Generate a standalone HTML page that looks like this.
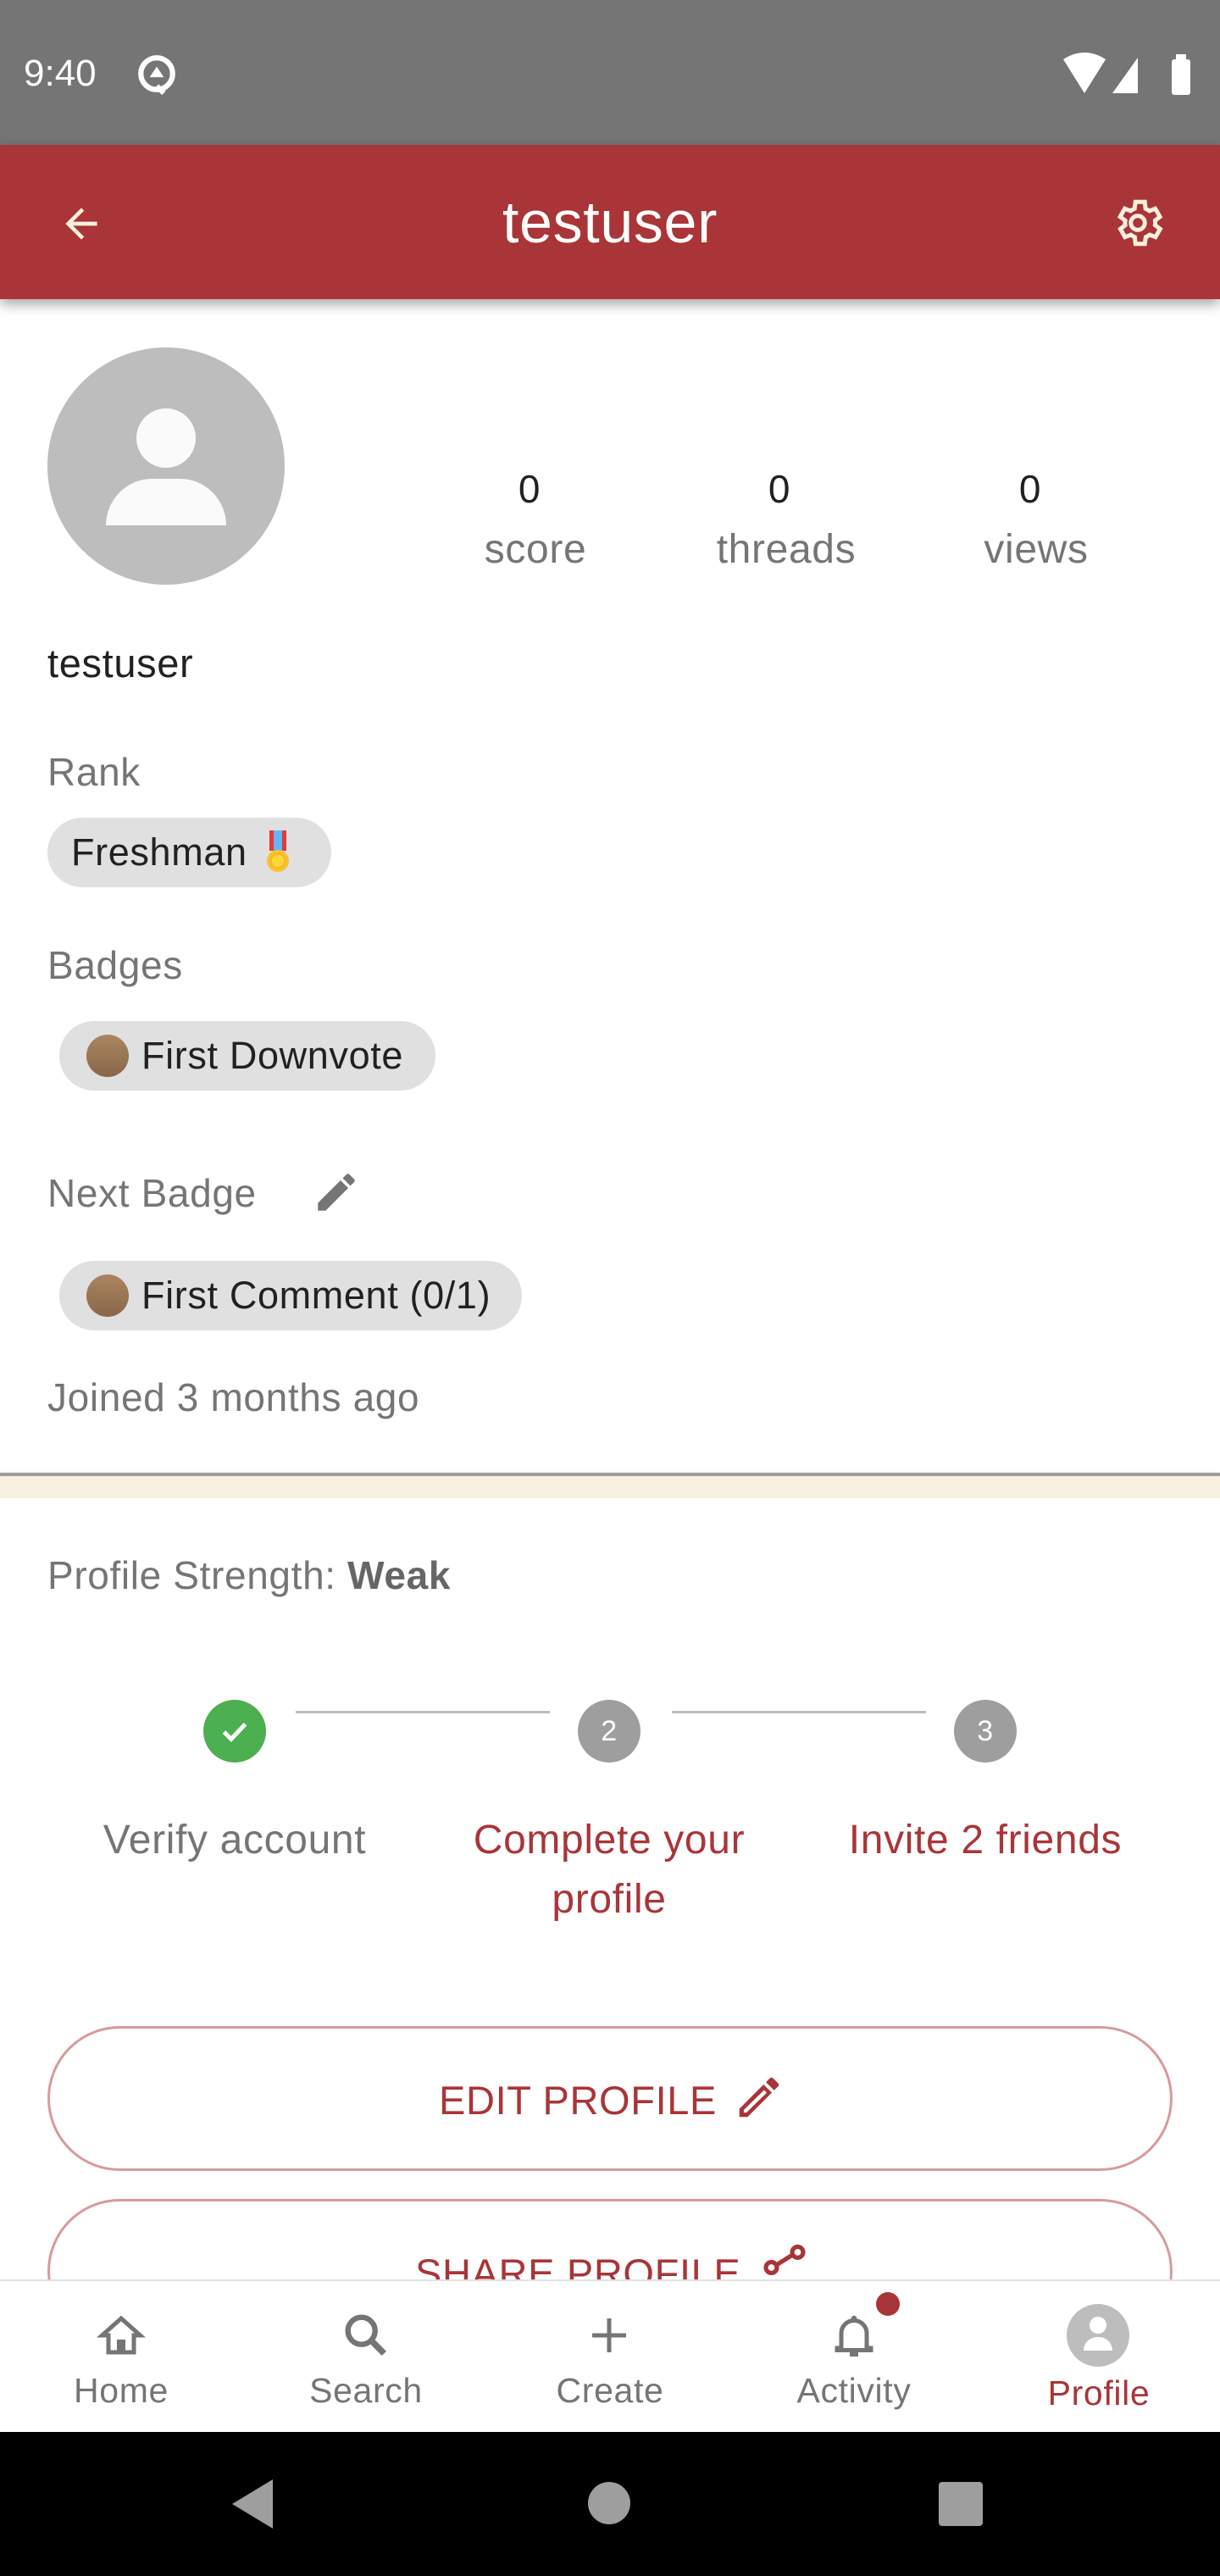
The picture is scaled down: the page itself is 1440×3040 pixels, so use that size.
<!DOCTYPE html>
<html><head><meta charset="utf-8"><style>
*{margin:0;padding:0;box-sizing:border-box}
body{width:1440px;height:3040px;position:relative;overflow:hidden;background:#fff;font-family:"Liberation Sans",sans-serif;letter-spacing:0.04em}
.a{position:absolute}
.t{position:absolute;white-space:nowrap}
.g{color:#757575}
.chip{position:absolute;background:#e0e0e0;border-radius:41px;height:82px;font-size:45px;color:#212121;line-height:82px}
.dot{position:absolute;width:50px;height:50px;border-radius:50%;background:linear-gradient(#a98560,#8a6749);top:16px;left:32px}
.c{text-align:center;transform:translateX(-50%)}
.navl{position:absolute;top:2798px;font-size:41px;color:#757575;transform:translateX(-50%)}
</style></head><body>
<div class="a" style="left:0;top:0;width:1440px;height:171px;background:#757575"></div>
<div class="t" style="left:28px;top:62px;font-size:44px;color:#fff;letter-spacing:0">9:40</div>
<svg class="a" style="left:160px;top:62px" width="50" height="50" viewBox="0 0 24 24"><circle cx="12" cy="12" r="9" fill="none" stroke="#fff" stroke-width="3"/><path d="M8 14l4-6 4 6z" fill="#fff"/><path d="M12 19l4 4" stroke="#fff" stroke-width="3"/></svg>
<svg class="a" style="left:1255px;top:62px" width="160" height="50" viewBox="0 0 160 50"><path d="M0 8 Q25 -8 50 8 L25 48Z" fill="#fff"/><path d="M58 48 L88 6 L88 48Z" fill="#fff"/><rect x="128" y="8" width="22" height="42" rx="3" fill="#fff"/><rect x="133" y="2" width="12" height="8" fill="#fff"/></svg>
<div class="a" style="left:0;top:171px;width:1440px;height:182px;background:#a93538;box-shadow:0 6px 14px rgba(0,0,0,.35)"></div>
<svg class="a" style="left:68px;top:236px" width="56" height="56" viewBox="0 0 24 24"><path d="M20 11H7.8l5.6-5.6L12 4l-8 8 8 8 1.4-1.4L7.8 13H20z" fill="#f8efdc"/></svg>
<div class="t c" style="left:720px;top:222px;font-size:70px;color:#fff">testuser</div>
<svg class="a" style="left:1310px;top:230px" width="66" height="66" viewBox="0 0 24 24"><path d="M19.4 13a7.5 7.5 0 000-2l2.1-1.6-2-3.5-2.5 1a7 7 0 00-1.7-1L15 3h-4l-.4 2.9a7 7 0 00-1.7 1l-2.5-1-2 3.5L6.6 11a7.5 7.5 0 000 2l-2.1 1.6 2 3.5 2.5-1a7 7 0 001.7 1L11 21h4l.4-2.9a7 7 0 001.7-1l2.5 1 2-3.5z" fill="none" stroke="#f8efdc" stroke-width="1.8"/><circle cx="12" cy="12" r="3" fill="none" stroke="#f8efdc" stroke-width="1.8"/></svg>

<div class="a" style="left:56px;top:410px;width:280px;height:280px;border-radius:50%;background:#bdbdbd"></div>
<div class="a" style="left:161px;top:482px;width:70px;height:70px;border-radius:50%;background:#fafafa"></div>
<div class="a" style="left:125px;top:565px;width:142px;height:55px;border-radius:70px 70px 0 0;background:#fafafa"></div>

<div class="t c" style="left:625px;top:550px;font-size:46px;color:#212121">0</div>
<div class="t c" style="left:920px;top:550px;font-size:46px;color:#212121">0</div>
<div class="t c" style="left:1216px;top:550px;font-size:46px;color:#212121">0</div>
<div class="t c g" style="left:632px;top:621px;font-size:48px">score</div>
<div class="t c g" style="left:928px;top:621px;font-size:48px">threads</div>
<div class="t c g" style="left:1223px;top:621px;font-size:48px">views</div>

<div class="t" style="left:56px;top:755px;font-size:47px;color:#212121">testuser</div>
<div class="t g" style="left:56px;top:884px;font-size:46px">Rank</div>
<div class="chip" style="left:56px;top:965px;width:335px;padding-left:28px">Freshman</div>
<svg class="a" style="left:314px;top:980px" width="28" height="52" viewBox="0 0 28 52"><rect x="4" y="0" width="20" height="24" fill="#e53935"/><rect x="9" y="0" width="10" height="24" fill="#64b5f6"/><circle cx="14" cy="36" r="13" fill="#fbc02d"/><circle cx="14" cy="36" r="8" fill="#fdd835" stroke="#f9a825"/></svg>
<div class="t g" style="left:56px;top:1112px;font-size:46px">Badges</div>
<div class="chip" style="left:70px;top:1205px;width:444px;padding-left:97px"><div class="dot"></div>First Downvote</div>
<div class="t g" style="left:56px;top:1381px;font-size:46px">Next Badge</div>
<svg class="a" style="left:368px;top:1378px" width="58" height="58" viewBox="0 0 24 24"><path d="M3 17.25V21h3.75L17.8 9.94l-3.75-3.75zM20.7 7.04a1 1 0 000-1.41l-2.34-2.34a1 1 0 00-1.41 0l-1.83 1.83 3.75 3.75z" fill="#757575"/></svg>
<div class="chip" style="left:70px;top:1488px;width:546px;padding-left:97px"><div class="dot"></div>First Comment (0/1)</div>
<div class="t g" style="left:56px;top:1622px;font-size:46px">Joined 3 months ago</div>

<div class="a" style="left:0;top:1738px;width:1440px;height:4px;background:#9e9e9e;box-shadow:0 2px 4px rgba(0,0,0,.4)"></div>
<div class="a" style="left:0;top:1742px;width:1440px;height:26px;background:#f8f0e0"></div>

<div class="t g" style="left:56px;top:1832px;font-size:46px">Profile Strength: <b style="color:#666">Weak</b></div>
<div class="a" style="left:349px;top:2019px;width:300px;height:3px;background:#bdbdbd"></div>
<div class="a" style="left:793px;top:2019px;width:300px;height:3px;background:#bdbdbd"></div>
<div class="a" style="left:240px;top:2006px;width:74px;height:74px;border-radius:50%;background:#4caf50"></div>
<svg class="a" style="left:252px;top:2018px" width="50" height="50" viewBox="0 0 24 24"><path d="M6 12.5l4 4 8-8.5" fill="none" stroke="#fff" stroke-width="2.4"/></svg>
<div class="a" style="left:682px;top:2006px;width:74px;height:74px;border-radius:50%;background:#9e9e9e;color:#fff;font-size:34px;text-align:center;line-height:74px">2</div>
<div class="a" style="left:1126px;top:2006px;width:74px;height:74px;border-radius:50%;background:#9e9e9e;color:#fff;font-size:34px;text-align:center;line-height:74px">3</div>
<div class="t c g" style="left:277px;top:2144px;font-size:48px">Verify account</div>
<div class="a" style="left:489px;top:2137px;width:460px;text-align:center;font-size:48px;line-height:70px;color:#a93538">Complete your profile</div>
<div class="t c" style="left:1163px;top:2144px;font-size:48px;color:#a93538">Invite 2 friends</div>

<div class="a" style="left:56px;top:2391px;width:1328px;height:171px;border:3px solid #d99a9c;border-radius:86px"></div>
<div class="t" style="left:518px;top:2451px;font-size:47px;color:#a93538">EDIT PROFILE</div>
<svg class="a" style="left:865px;top:2444px" width="62" height="62" viewBox="0 0 24 24"><path d="M3 17.25V21h3.75L17.8 9.94l-3.75-3.75zM20.7 7.04a1 1 0 000-1.41l-2.34-2.34a1 1 0 00-1.41 0l-1.83 1.83 3.75 3.75z" fill="#a93538"/><path d="M5 17.8V19h1.2L15.5 9.9l-1.2-1.2z" fill="#fff"/></svg>
<div class="a" style="left:56px;top:2595px;width:1328px;height:171px;border:3px solid #d99a9c;border-radius:86px"></div>
<div class="t" style="left:490px;top:2655px;font-size:47px;color:#a93538">SHARE PROFILE</div>
<svg class="a" style="left:895px;top:2645px" width="62" height="62" viewBox="0 0 24 24"><circle cx="18" cy="5" r="2.5" fill="none" stroke="#a93538" stroke-width="2"/><circle cx="6" cy="12" r="2.5" fill="none" stroke="#a93538" stroke-width="2"/><path d="M8 11l8-5" stroke="#a93538" stroke-width="2"/></svg>

<div class="a" style="left:0;top:2690px;width:1440px;height:180px;background:#fff;border-top:2px solid #e0e0e0"></div>
<svg class="a" style="left:113px;top:2726px" width="60" height="60" viewBox="0 0 24 24"><path d="M12 4L3 12h3v8h5v-5h2v5h5v-8h3z" fill="none" stroke="#757575" stroke-width="2"/></svg>
<svg class="a" style="left:400px;top:2724px" width="64" height="64" viewBox="0 0 24 24"><circle cx="10" cy="10" r="6" fill="none" stroke="#757575" stroke-width="2.4"/><path d="M14.5 14.5L20 20" stroke="#757575" stroke-width="2.8"/></svg>
<svg class="a" style="left:689px;top:2726px" width="60" height="60" viewBox="0 0 24 24"><path d="M12 4v16M4 12h16" stroke="#757575" stroke-width="2"/></svg>
<svg class="a" style="left:978px;top:2724px" width="60" height="64" viewBox="0 0 24 24"><path d="M6 18V11a6 6 0 0112 0v7h2v1H4v-1z" fill="none" stroke="#757575" stroke-width="2"/><path d="M10 21h4" stroke="#757575" stroke-width="2"/><circle cx="12" cy="4" r="1.3" fill="#757575"/></svg>
<div class="a" style="left:1034px;top:2705px;width:28px;height:28px;border-radius:50%;background:#a93538"></div>
<div class="a" style="left:1259px;top:2719px;width:74px;height:74px;border-radius:50%;background:#bdbdbd"></div>
<div class="a" style="left:1286px;top:2734px;width:20px;height:20px;border-radius:50%;background:#fff"></div>
<div class="a" style="left:1279px;top:2758px;width:34px;height:16px;border-radius:17px 17px 0 0;background:#fff"></div>
<div class="navl" style="left:143px">Home</div>
<div class="navl" style="left:432px">Search</div>
<div class="navl" style="left:720px">Create</div>
<div class="navl" style="left:1008px">Activity</div>
<div class="navl" style="left:1297px;color:#a93538;top:2801px">Profile</div>

<div class="a" style="left:0;top:2870px;width:1440px;height:170px;background:#000"></div>
<svg class="a" style="left:270px;top:2922px" width="60" height="66" viewBox="0 0 60 66"><path d="M52 4v58L4 33z" fill="#9e9e9e"/></svg>
<div class="a" style="left:694px;top:2929px;width:50px;height:50px;border-radius:50%;background:#9e9e9e"></div>
<div class="a" style="left:1108px;top:2929px;width:52px;height:52px;border-radius:4px;background:#9e9e9e"></div>
</body></html>
